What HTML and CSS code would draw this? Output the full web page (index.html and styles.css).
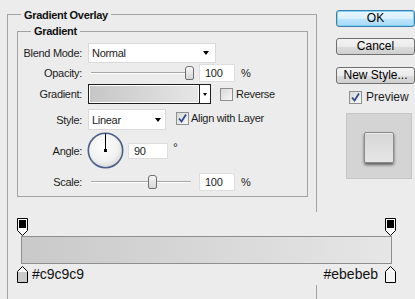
FILE: index.html
```html
<!DOCTYPE html>
<html>
<head>
<meta charset="UTF-8">
<title>Layer Style - Gradient Overlay</title>
<link rel="stylesheet" href="styles.css">
</head>
<body>
<div class="page">
  <div class="outer">
    <div class="cap"><span>Gradient Overlay</span></div>
    <div class="inner">
      <div class="cap cap-in"><span>Gradient</span></div>

      <div class="row r-blend">
        <div class="label">Blend Mode:</div>
        <div class="select sel-blend"><span>Normal</span><i class="arrow"></i></div>
      </div>

      <div class="row r-opacity">
        <div class="label">Opacity:</div>
        <div class="slider"><div class="thumb" style="left: 94px"></div></div>
        <div class="num">100</div>
        <span class="unit">%</span>
      </div>

      <div class="row r-grad">
        <div class="label">Gradient:</div>
        <div class="grad">
          <div class="grad-fill"></div>
          <div class="grad-btn"><i class="arrow small"></i></div>
        </div>
        <span class="cb cb-rev"></span>
        <span class="cb-text">Reverse</span>
      </div>

      <div class="row r-style">
        <div class="label">Style:</div>
        <div class="select sel-style"><span>Linear</span><i class="arrow"></i></div>
        <span class="cb cb-align"><svg width="11" height="11" viewBox="0 0 11 11"><path d="M2 5.5 L4.5 8.5 L9 1.5" fill="none" stroke="#2c4b8e" stroke-width="1.8"/></svg></span>
        <span class="cb-text">Align with Layer</span>
      </div>

      <div class="row r-angle">
        <div class="label">Angle:</div>
        <svg class="dial" width="37" height="37" viewBox="0 0 37 37">
          <defs>
            <radialGradient id="dialfill" cx="0.45" cy="0.4" r="0.6">
              <stop offset="0" stop-color="#ffffff"/>
              <stop offset="0.7" stop-color="#f1f1f1"/>
              <stop offset="1" stop-color="#d9d9d9"/>
            </radialGradient>
          </defs>
          <circle cx="18.5" cy="18.5" r="17.2" fill="url(#dialfill)" stroke="#4c5f88" stroke-width="1.6"/>
          <line x1="18.5" y1="1.5" x2="18.5" y2="18.5" stroke="#000" stroke-width="1"/>
          <rect x="17" y="17" width="3" height="3" fill="#000"/>
        </svg>
        <div class="num num-angle">90</div>
        <span class="deg">°</span>
      </div>

      <div class="row r-scale">
        <div class="label">Scale:</div>
        <div class="slider"><div class="thumb" style="left: 57px"></div></div>
        <div class="num">100</div>
        <span class="unit">%</span>
      </div>
    </div>

    <div class="editor">
      <div class="stops">
        <svg width="11" height="18" viewBox="0 0 11 18"><path d="M0.5 0.5H10.5V12.5L5.5 17.5L0.5 12.5Z" fill="#fff" stroke="#000"/><rect x="2" y="2" width="7" height="8" fill="#000"/></svg>
        <svg width="11" height="18" viewBox="0 0 11 18"><path d="M0.5 0.5H10.5V12.5L5.5 17.5L0.5 12.5Z" fill="#fff" stroke="#000"/><rect x="2" y="2" width="7" height="8" fill="#000"/></svg>
      </div>
      <div class="bar"></div>
      <div class="stops">
        <div class="stop-l">
          <svg width="11" height="17" viewBox="0 0 11 17"><path d="M5.5 0.5L10.5 5.5V16.5H0.5V5.5Z" fill="#fff" stroke="#000"/><rect x="1" y="6" width="9" height="10" fill="#c9c9c9"/></svg>
          <span>#c9c9c9</span>
        </div>
        <div class="stop-r">
          <span>#ebebeb</span>
          <svg width="11" height="17" viewBox="0 0 11 17"><path d="M5.5 0.5L10.5 5.5V16.5H0.5V5.5Z" fill="#fff" stroke="#000"/><rect x="1" y="6" width="9" height="10" fill="#f4f4f4"/></svg>
        </div>
      </div>
    </div>
  </div>

  <div class="side">
    <div class="btn btn-ok">OK</div>
    <div class="btn btn-cancel">Cancel</div>
    <div class="btn btn-new">New Style...</div>
    <div class="preview-row">
      <span class="cb"><svg width="11" height="11" viewBox="0 0 11 11"><path d="M2 5.5 L4.5 8.5 L9 1.5" fill="none" stroke="#2c4b8e" stroke-width="1.8"/></svg></span>
      <span class="preview-text">Preview</span>
    </div>
    <div class="preview-box"><div class="preview-square"></div></div>
  </div>
</div>
</body>
</html>
```

FILE: styles.css
```css
html, body {
  margin: 0;
  overflow: hidden;
}

body {
  background: #ececec;
  color: #1c1c1c;
  font-family: "Liberation Sans", Arial, sans-serif;
  font-size: 11px;
  letter-spacing: -0.3px;
}

.page {
  display: flex;
  align-items: flex-start;
}

/* group boxes */
.outer {
  margin: 14px 0 0 7px;
  width: 310px;
  height: 286px;
  box-sizing: border-box;
  border: 1px solid #a3a3a3;
}

.cap {
  margin: -6px 0 0 13px;
  height: 13px;
  line-height: 13px;
}

.cap span {
  background: #ececec;
  padding: 0 3px;
  font-weight: bold;
  color: #111;
}

.cap-in {
  margin-top: -7px;
  margin-bottom: 5px;
}

.inner {
  margin: 9px 8px 0 9px;
  border: 1px solid #a3a3a3;
  padding-bottom: 5px;
}

/* rows */
.row {
  display: flex;
  align-items: center;
}

.label {
  width: 64px;
  flex: none;
  text-align: right;
  margin-right: 6px;
}

.r-blend { height: 20px; }
.r-opacity { height: 20px; }
.r-grad { height: 20px; margin-top: 1px; }
.r-style { height: 21px; margin-top: 5px; }
.r-angle { height: 37px; margin-top: 2px; }
.r-scale { height: 19px; margin-top: 3px; }

.select {
  display: flex;
  align-items: center;
  justify-content: space-between;
  box-sizing: border-box;
  background: #fff;
  border: 1px solid #dadada;
  padding: 0 6px 0 3px;
}

.sel-blend {
  width: 128px;
  height: 20px;
}

.sel-style {
  width: 78px;
  height: 21px;
  padding-right: 4px;
}

.arrow {
  width: 0;
  height: 0;
  border-left: 3.5px solid transparent;
  border-right: 3.5px solid transparent;
  border-top: 4px solid #000;
}

.arrow.small {
  border-left-width: 2.5px;
  border-right-width: 2.5px;
  border-top-width: 3px;
}

/* sliders */
.slider {
  position: relative;
  flex: none;
  width: 100px;
  height: 14px;
  margin-left: 3px;
}

.slider::before {
  content: "";
  position: absolute;
  left: 0;
  right: 0;
  top: 6px;
  height: 1px;
  background: #a6a6a6;
  border-bottom: 1px solid #fff;
}

.thumb {
  position: absolute;
  top: 0;
  width: 9px;
  height: 14px;
  box-sizing: border-box;
  border: 1px solid #707070;
  border-radius: 3px 3px 2px 2px;
  background: linear-gradient(#f6f6f6, #d6d6d6);
}

.num {
  flex: none;
  width: 36px;
  height: 18px;
  line-height: 16px;
  box-sizing: border-box;
  margin-left: 8px;
  padding-left: 5px;
  background: #fff;
  border: 1px solid #dedede;
}

.unit {
  margin-left: 6px;
}

/* gradient picker */
.grad {
  display: flex;
  width: 123px;
  height: 20px;
  box-sizing: border-box;
  border: 1px solid #1e1e1e;
}

.grad-fill {
  flex: 1;
  border: 1px solid #fff;
  background: linear-gradient(to right, #c6c6c6, #e6e6e6);
}

.grad-btn {
  width: 10px;
  display: flex;
  align-items: center;
  justify-content: center;
  background: #fff;
  border-left: 1px solid #1e1e1e;
}

/* checkboxes */
.cb {
  display: inline-flex;
  align-items: center;
  justify-content: center;
  flex: none;
  width: 13px;
  height: 13px;
  box-sizing: border-box;
  border: 1px solid #8e8f8f;
  background: linear-gradient(135deg, #d8d8d8, #f8f8f8);
}

.cb-rev {
  margin-left: 9px;
}

.cb-align {
  margin-left: 10px;
  margin-top: -3px;
}

.cb-text {
  margin-left: 3px;
}

.r-style .cb-text {
  margin-left: 2px;
  margin-top: -3px;
}

/* angle */
.dial {
  flex: none;
  margin-left: -1px;
}

.num-angle {
  width: 40px;
  height: 16px;
  line-height: 14px;
  margin-left: 4px;
}

.deg {
  margin-left: 5px;
  margin-top: -6px;
  font-size: 12px;
}

/* gradient editor */
.editor {
  margin: 15px -100px 0 0;
  padding: 6px 0 3px 9px;
  background: #ececec;
  font-size: 14px;
  letter-spacing: 0;
  color: #111;
}

.stops {
  display: flex;
  justify-content: space-between;
  align-items: center;
  width: 379px;
  height: 18px;
}

.stops svg {
  display: block;
}

.bar {
  width: 371px;
  height: 28px;
  box-sizing: border-box;
  margin-left: 4px;
  border: 1px solid #8f8f8f;
  background: linear-gradient(to right, #c9c9c9, #e6e6e6);
}

.stop-l, .stop-r {
  display: flex;
  align-items: center;
  padding-top: 2px;
}

.stop-l span {
  margin-left: 4px;
}

.stop-r span {
  margin-right: 7px;
}

/* right column */
.side {
  margin: 10px 0 0 19px;
  width: 79px;
  flex: none;
  font-size: 12px;
  letter-spacing: 0;
}

.btn {
  height: 17px;
  line-height: 15px;
  box-sizing: border-box;
  text-align: center;
  color: #000;
  border: 1px solid #707070;
  border-radius: 3px;
  background: linear-gradient(#f3f3f3 0%, #ebebeb 50%, #dddddd 51%, #cfcfcf 100%);
  white-space: nowrap;
}

.btn-ok {
  border-color: #3c7fb1;
  box-shadow: inset 0 0 0 1px #7fd4f6;
  background: linear-gradient(#eaf6fd 0%, #d9f0fc 50%, #bee6fd 51%, #a7d9f5 100%);
  margin-bottom: 11px;
}

.btn-cancel {
  margin-bottom: 12px;
}

.preview-row {
  display: flex;
  align-items: center;
  height: 14px;
  margin-top: 6px;
  padding-left: 13px;
}

.preview-text {
  margin-left: 4px;
}

.preview-box {
  display: flex;
  align-items: center;
  justify-content: center;
  width: 66px;
  height: 66px;
  box-sizing: border-box;
  margin: 9px 0 0 10px;
  border: 1px solid #c6c6c6;
  background: #d4d4d4;
}

.preview-square {
  width: 30px;
  height: 31px;
  margin-top: 2px;
  box-sizing: border-box;
  border: 1px solid #8a8a8a;
  border-radius: 2px;
  background: linear-gradient(#d6d6d6, #e6e6e6);
  box-shadow: 0 2px 3px rgba(0, 0, 0, 0.55), inset 0 1px 1px rgba(255, 255, 255, 0.6);
}
```
